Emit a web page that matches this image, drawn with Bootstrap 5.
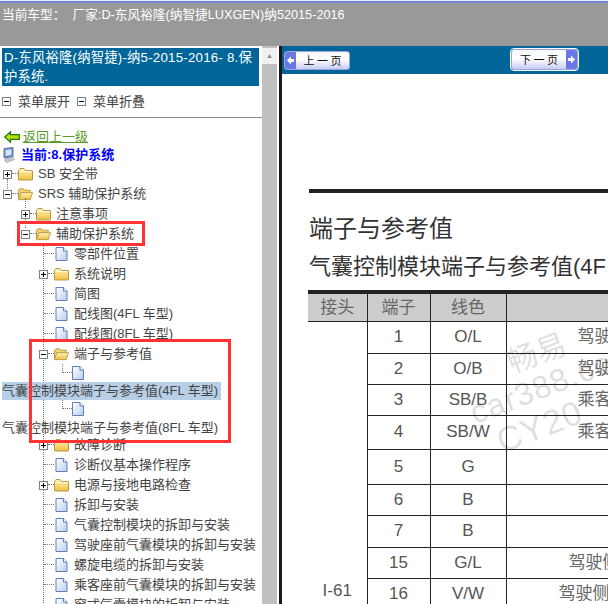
<!DOCTYPE html>
<html lang="zh-CN">
<head>
    <meta charset="utf-8">
    <meta name="viewport" content="width=device-width, initial-scale=1.0">
    <title>维修手册</title>
    <link href="https://cdn.jsdelivr.net/npm/bootstrap@5.3.0/dist/css/bootstrap.min.css" rel="stylesheet">
    <style>
        html, body { height: 604px; overflow: hidden; }
        body { font-family: "Liberation Sans", "Noto Sans CJK SC", sans-serif; font-size: 13px; color: #444; background: #fff; position: relative; }
        .svg-defs { position: absolute; width: 0; height: 0; }

        .top-strip { height: 3px; background: linear-gradient(#e8ecf8 33%, #6f86d6 33%); }
        .top-bar { height: 43px; background: #999; color: #fff; font-size: 12.7px; line-height: 18px; padding: 3px 0 0 2px; white-space: pre; }

        .page-main { height: 558px; }
        .left-pane { width: 262px; flex: none; overflow: hidden; }
        .side-title { margin: 2px 3px 0 2px; padding: 0 0 0 2px; height: 38px; background: #006699; color: #fff; font-size: 13.33px; letter-spacing: .2px; line-height: 19px; }
        .side-menu { height: 31px; padding-left: 2px; gap: 7px; }
        .side-rule { height: 1px; margin: 0; opacity: 1; border: 0; background: #888; }
        .back-row { height: 18px; margin-top: 10px; padding-left: 4px; gap: 3px; }
        .back-row a { color: #5c9a2c; }
        .cur-row { height: 18px; padding-left: 3px; gap: 6px; color: #0000ff; font-weight: 700; }

        .tree-row { height: 20px; position: relative; white-space: nowrap; }
        .tree-root { padding-left: 3px; }
        .tree-second { padding-left: 21px; }
        .tree-dash { height: 10px; border-bottom: 1px dotted #777; align-self: flex-start; flex: none; }
        .dash-s { width: 6px; }
        .dash-l { width: 10px; }
        .tree-icon { width: 15px; margin-right: 5px; flex: none; }
        .tree-pm { flex: none; }
        .joined::before { content: ""; position: absolute; top: -5px; height: 10px; border-left: 1px dotted #777; }
        .joined-root::before { left: 7px; }
        .joined-second::before { left: 25px; top: -6px; }
        .tree-branch { margin-left: 43px; border-left: 1px dotted #777; }
        .tree-branch .tree-pm { margin-left: -5px; }
        .tree-file-row { height: 18px; }
        .tree-elbow { width: 10px; height: 9px; margin-left: 18px; border-left: 1px dotted #777; border-bottom: 1px dotted #777; align-self: flex-start; flex: none; }
        .tree-long { height: 18px; line-height: 18px; margin-left: -44px; padding-left: 2px; white-space: nowrap; position: relative; }
        .tree-long span { display: inline-block; padding-right: 3px; }
        .tree-long-low { height: 17px; line-height: 20px; }
        .tree-on { background: #b8cfe8; }

        .fake-scroll { width: 15px; background: #c0c0c0; flex: none; }
        .fake-scroll-up { height: 16px; margin-top: 2px; background: #f0f0f0; color: #888; font-size: 7px; line-height: 16px; text-align: center; }
        .fake-gap { width: 2px; flex: none; }
        .pane-split { width: 3px; background: #1a1a1a; flex: none; }

        .right-pane { overflow: hidden; position: relative; min-width: 0; }
        .page-nav { height: 28px; background: #006699; flex: none; }
        .page-btn { height: 19px; width: 66px; padding: 0; gap: 0; border: 1px solid #9aa4e0; border-radius: 3px; background: linear-gradient(#f7f8ff, #fff 45%, #c8ccf4); color: #111; font-family: "Noto Sans CJK SC", sans-serif; font-size: 11px; line-height: 17px; overflow: hidden; }
        .page-btn:hover { background: linear-gradient(#f7f8ff, #fff 45%, #c8ccf4); color: #111; }
        .btn-label { flex: 1; text-align: center; white-space: pre; }
        .btn-end { width: 11px; align-self: stretch; background: #6a78e6; flex: none; }
        .btn-prev { margin-left: 2px; }
        .btn-next { margin-left: 161px; margin-top: -1px; height: 21px; width: 67px; outline: 1px solid #fff; }

        .doc-rule { height: 4px; margin: 115px 0 0 27px; background: #222; flex: none; }
        .doc-title { margin: 20px 0 0 27px; font-size: 24px; line-height: 32px; font-weight: 400; color: #333; font-family: "Liberation Sans", "Noto Sans CJK SC", sans-serif; }
        .doc-sub { margin: 8px 0 0 27px; font-size: 22px; line-height: 28px; font-weight: 400; color: #333; white-space: nowrap; font-family: "Liberation Sans", "Noto Sans CJK SC", sans-serif; }
        .term-table { margin: 9px 0 0 26px; width: 450px; table-layout: fixed; border-collapse: collapse; flex: none; color: #555; font-size: 17px; }
        .term-table th, .term-table td { border: 1px solid #222; padding: 0; text-align: center; font-weight: 400; vertical-align: middle; white-space: nowrap; overflow: hidden; }
        .term-table thead tr { height: 29px; background: #ccc; border-top: 4px solid #222; color: #666; }
        .term-table thead th { border-top: 0; }
        .term-table th:first-child, .term-table td:first-child { border-left: 0; }
        .term-table tbody td:first-child { border-top: 0; border-bottom: 0; }
        .term-table tbody .cell-conn { vertical-align: top; }
        .term-table .cell-desc { text-align: left; color: #666; }
        .term-table .desc-a { padding-left: 71px; }
        .term-table .desc-b { padding-left: 62px; }
        .term-table .desc-c { padding-left: 52px; }
        .col-a { width: 59px; }
        .col-b { width: 63px; }
        .col-c { width: 76px; }
        .rh-31 { height: 31px; }
        .rh-32 { height: 32px; }
        .rh-34 { height: 34px; }
        .rh-35 { height: 35px; }

        .water-mark { position: absolute; color: rgba(0, 0, 0, .14); transform-origin: left bottom; white-space: nowrap; pointer-events: none; line-height: 1; }
        .mark-one { left: 232px; top: 302px; font-size: 30px; transform: rotate(-20deg); }
        .mark-two { left: 195px; top: 351px; font-size: 32px; transform: rotate(-21deg); letter-spacing: 1px; }
        .mark-three { left: 222px; top: 378px; font-size: 34px; transform: rotate(-21deg); letter-spacing: 1px; }

        .red-box { position: absolute; border: 3px solid #f33; pointer-events: none; }
        .red-one { left: 17px; top: 221px; width: 128px; height: 25px; }
        .red-two { left: 29px; top: 339px; width: 202px; height: 104px; }
    </style>
</head>
<body>
    <svg class="svg-defs" aria-hidden="true">
        <defs>
            <linearGradient id="folderFill" x1="0" y1="0" x2="0" y2="1">
                <stop offset="0" stop-color="#fff3b8"/><stop offset="1" stop-color="#f0c040"/>
            </linearGradient>
            <linearGradient id="pageFill" x1="0" y1="0" x2="1" y2="1">
                <stop offset="0" stop-color="#ffffff"/><stop offset="1" stop-color="#b9cdf0"/>
            </linearGradient>
            <symbol id="icoPlus" viewBox="0 0 9 9"><rect x=".5" y=".5" width="8" height="8" fill="#fff" stroke="#808080"/><path d="M2 4.500h5M4.500 2v5" stroke="#000"/></symbol>
            <symbol id="icoMinus" viewBox="0 0 9 9"><rect x=".5" y=".5" width="8" height="8" fill="#fff" stroke="#808080"/><path d="M2 4.500h5" stroke="#000"/></symbol>
            <symbol id="icoFolder" viewBox="0 0 15 14"><path d="M.5 3.500 2 1.500h4l1.500 2h6.500a.5.5 0 0 1 .5.5v8.500a.5.5 0 0 1-.5.5H1a.5.5 0 0 1-.5-.5z" fill="url(#folderFill)" stroke="#b59a4a"/><path d="M1.500 4.500h12" stroke="#fffbe0"/></symbol>
            <symbol id="icoFolderOpen" viewBox="0 0 16 14"><path d="M.5 12V3l1.500-1.500h4L7.500 3h5.500v2" fill="#f3d36a" stroke="#b59a4a"/><path d="M.5 13 3 5.500h12.500L13 13z" fill="url(#folderFill)" stroke="#b59a4a"/></symbol>
            <symbol id="icoFile" viewBox="0 0 12 14"><path d="M.5.5h7.500l3.500 3.500v9.500H.5z" fill="url(#pageFill)" stroke="#5f7fb8"/><path d="M8 .5V4h3.500" fill="#fff" stroke="#5f7fb8"/></symbol>
            <symbol id="icoPc" viewBox="0 0 12 16"><path d="M1 1.500 10 .5v9l-9 1.500z" fill="#5f86d8" stroke="#6a7a9a"/><path d="M2.500 3 8.500 2.200v5.800l-6 1z" fill="#d6e6fb"/><path d="M2 12l8-1.500 1.500 2-7.500 3-2-1.500z" fill="#c9ccd4" stroke="#8a8f9c" stroke-width=".6"/></symbol>
            <symbol id="icoBack" viewBox="0 0 16 12"><path d="M.7 6 6.500.8v2.900h8.800v4.600H6.500v2.900z" fill="#b8e000" stroke="#1c7a12" stroke-width="1.200"/></symbol>
        </defs>
    </svg>

    <div class="top-strip"></div>
    <div class="top-bar">当前车型：  厂家:D-东风裕隆(纳智捷LUXGEN)纳52015-2016</div>

    <div class="page-main d-flex">
        <div class="left-pane">
            <div class="side-title">D-东风裕隆(纳智捷)-纳5-2015-2016- 8.保护系统.</div>
            <div class="side-menu d-flex align-items-center">
                <svg width="9" height="9"><use href="#icoMinus"/></svg><span>菜单展开</span>
                <svg width="9" height="9"><use href="#icoMinus"/></svg><span>菜单折叠</span>
            </div>
            <hr class="side-rule">
            <div class="back-row d-flex align-items-center">
                <svg width="16" height="12"><use href="#icoBack"/></svg><a href="#">返回上一级</a>
            </div>
            <div class="cur-row d-flex align-items-center">
                <svg width="12" height="16"><use href="#icoPc"/></svg><span>当前:8.保护系统</span>
            </div>

            <div class="tree-row tree-root d-flex align-items-center">
                <svg class="tree-pm" width="9" height="9"><use href="#icoPlus"/></svg><span class="tree-dash dash-s"></span>
                <svg class="tree-icon" width="15" height="14"><use href="#icoFolder"/></svg><span>SB 安全带</span>
            </div>
            <div class="tree-row tree-root joined joined-root d-flex align-items-center">
                <svg class="tree-pm" width="9" height="9"><use href="#icoMinus"/></svg><span class="tree-dash dash-s"></span>
                <svg class="tree-icon" width="15" height="14"><use href="#icoFolderOpen"/></svg><span>SRS 辅助保护系统</span>
            </div>
            <div class="tree-row tree-second joined joined-second d-flex align-items-center">
                <svg class="tree-pm" width="9" height="9"><use href="#icoPlus"/></svg><span class="tree-dash dash-s"></span>
                <svg class="tree-icon" width="15" height="14"><use href="#icoFolder"/></svg><span>注意事项</span>
            </div>
            <div class="tree-row tree-second joined joined-second d-flex align-items-center">
                <svg class="tree-pm" width="9" height="9"><use href="#icoMinus"/></svg><span class="tree-dash dash-s"></span>
                <svg class="tree-icon" width="15" height="14"><use href="#icoFolderOpen"/></svg><span>辅助保护系统</span>
            </div>

            <div class="tree-branch">
                <div class="tree-row d-flex align-items-center"><span class="tree-dash dash-l"></span><svg class="tree-icon" width="12" height="14"><use href="#icoFile"/></svg><span>零部件位置</span></div>
                <div class="tree-row d-flex align-items-center">
                    <svg class="tree-pm" width="9" height="9"><use href="#icoPlus"/></svg><span class="tree-dash dash-s"></span>
                    <svg class="tree-icon" width="15" height="14"><use href="#icoFolder"/></svg><span>系统说明</span>
                </div>
                <div class="tree-row d-flex align-items-center"><span class="tree-dash dash-l"></span><svg class="tree-icon" width="12" height="14"><use href="#icoFile"/></svg><span>简图</span></div>
                <div class="tree-row d-flex align-items-center"><span class="tree-dash dash-l"></span><svg class="tree-icon" width="12" height="14"><use href="#icoFile"/></svg><span>配线图(4FL 车型)</span></div>
                <div class="tree-row d-flex align-items-center"><span class="tree-dash dash-l"></span><svg class="tree-icon" width="12" height="14"><use href="#icoFile"/></svg><span>配线图(8FL 车型)</span></div>
                <div class="tree-row d-flex align-items-center">
                    <svg class="tree-pm" width="9" height="9"><use href="#icoMinus"/></svg><span class="tree-dash dash-s"></span>
                    <svg class="tree-icon" width="15" height="14"><use href="#icoFolderOpen"/></svg><span>端子与参考值</span>
                </div>
                <div class="tree-file-row d-flex align-items-center"><span class="tree-elbow"></span><svg width="12" height="14"><use href="#icoFile"/></svg></div>
                <div class="tree-long"><span class="tree-on">气囊控制模块端子与参考值(4FL 车型)</span></div>
                <div class="tree-file-row d-flex align-items-center"><span class="tree-elbow"></span><svg width="12" height="14"><use href="#icoFile"/></svg></div>
                <div class="tree-long tree-long-low"><span>气囊控制模块端子与参考值(8FL 车型)</span></div>
                <div class="tree-row d-flex align-items-center">
                    <svg class="tree-pm" width="9" height="9"><use href="#icoPlus"/></svg><span class="tree-dash dash-s"></span>
                    <svg class="tree-icon" width="15" height="14"><use href="#icoFolder"/></svg><span>故障诊断</span>
                </div>
                <div class="tree-row d-flex align-items-center"><span class="tree-dash dash-l"></span><svg class="tree-icon" width="12" height="14"><use href="#icoFile"/></svg><span>诊断仪基本操作程序</span></div>
                <div class="tree-row d-flex align-items-center">
                    <svg class="tree-pm" width="9" height="9"><use href="#icoPlus"/></svg><span class="tree-dash dash-s"></span>
                    <svg class="tree-icon" width="15" height="14"><use href="#icoFolder"/></svg><span>电源与接地电路检查</span>
                </div>
                <div class="tree-row d-flex align-items-center"><span class="tree-dash dash-l"></span><svg class="tree-icon" width="12" height="14"><use href="#icoFile"/></svg><span>拆卸与安装</span></div>
                <div class="tree-row d-flex align-items-center"><span class="tree-dash dash-l"></span><svg class="tree-icon" width="12" height="14"><use href="#icoFile"/></svg><span>气囊控制模块的拆卸与安装</span></div>
                <div class="tree-row d-flex align-items-center"><span class="tree-dash dash-l"></span><svg class="tree-icon" width="12" height="14"><use href="#icoFile"/></svg><span>驾驶座前气囊模块的拆卸与安装</span></div>
                <div class="tree-row d-flex align-items-center"><span class="tree-dash dash-l"></span><svg class="tree-icon" width="12" height="14"><use href="#icoFile"/></svg><span>螺旋电缆的拆卸与安装</span></div>
                <div class="tree-row d-flex align-items-center"><span class="tree-dash dash-l"></span><svg class="tree-icon" width="12" height="14"><use href="#icoFile"/></svg><span>乘客座前气囊模块的拆卸与安装</span></div>
                <div class="tree-row d-flex align-items-center"><span class="tree-dash dash-l"></span><svg class="tree-icon" width="12" height="14"><use href="#icoFile"/></svg><span>窗式气囊模块的拆卸与安装</span></div>
            </div>
        </div>

        <div class="fake-scroll"><div class="fake-scroll-up">▲</div></div>
        <div class="fake-gap"></div>
        <div class="pane-split"></div>

        <div class="right-pane flex-grow-1 d-flex flex-column">
            <div class="page-nav d-flex align-items-center">
                <button type="button" class="btn page-btn btn-prev d-flex align-items-center"><svg class="btn-end" viewBox="0 0 11 17"><path d="M2 8.500 6 4.500v2.500h3v3H6v2.500z" fill="#fff"/></svg><span class="btn-label">上 一 页</span></button>
                <button type="button" class="btn page-btn btn-next d-flex align-items-center"><span class="btn-label">下 一 页</span><svg class="btn-end" viewBox="0 0 11 19"><path d="M9 9.500 5 5.500v2.500H2v3h3v2.500z" fill="#fff"/></svg></button>
            </div>
            <div class="doc-rule"></div>
            <h4 class="doc-title">端子与参考值</h4>
            <h5 class="doc-sub">气囊控制模块端子与参考值(4F</h5>
            <table class="term-table">
                <colgroup><col class="col-a"><col class="col-b"><col class="col-c"><col></colgroup>
                <thead>
                    <tr><th>接头</th><th>端子</th><th>线色</th><th></th></tr>
                </thead>
                <tbody>
                    <tr class="rh-32"><td></td><td>1</td><td>O/L</td><td class="cell-desc desc-a">驾驶</td></tr>
                    <tr class="rh-31"><td></td><td>2</td><td>O/B</td><td class="cell-desc desc-a">驾驶</td></tr>
                    <tr class="rh-31"><td></td><td>3</td><td>SB/B</td><td class="cell-desc desc-a">乘客</td></tr>
                    <tr class="rh-34"><td></td><td>4</td><td>SB/W</td><td class="cell-desc desc-a">乘客</td></tr>
                    <tr class="rh-35"><td></td><td>5</td><td>G</td><td></td></tr>
                    <tr class="rh-31"><td></td><td>6</td><td>B</td><td></td></tr>
                    <tr class="rh-32"><td></td><td>7</td><td>B</td><td></td></tr>
                    <tr class="rh-31"><td></td><td>15</td><td>G/L</td><td class="cell-desc desc-b">驾驶侧</td></tr>
                    <tr class="rh-31"><td class="cell-conn">I-61</td><td>16</td><td>V/W</td><td class="cell-desc desc-c">驾驶侧</td></tr>
                </tbody>
            </table>
            <div class="water-mark mark-one">畅易</div>
            <div class="water-mark mark-two">car388.co</div>
            <div class="water-mark mark-three">CY20</div>
        </div>
    </div>

    <div class="red-box red-one"></div>
    <div class="red-box red-two"></div>

    <script src="https://cdn.jsdelivr.net/npm/bootstrap@5.3.0/dist/js/bootstrap.bundle.min.js"></script>
</body>
</html>
